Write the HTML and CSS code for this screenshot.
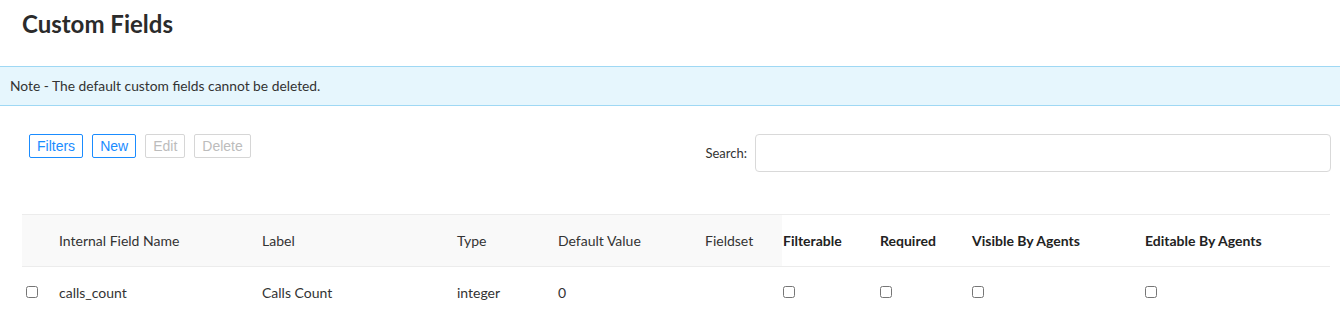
FILE: index.html
```html
<!DOCTYPE html>
<html lang="en">
<head>
  <meta charset="UTF-8" />
  <title>Custom Fields</title>
  <link rel="stylesheet" href="styles.css">
</head>
<body>
  <h1 class="page-title">Custom Fields</h1>

  <div class="note">Note - The default custom fields cannot be deleted.</div>

  <div class="toolbar">
    <div class="actions">
      <button class="btn">Filters</button>
      <button class="btn">New</button>
      <button class="btn" disabled>Edit</button>
      <button class="btn" disabled>Delete</button>
    </div>
    <label class="search">
      <span>Search:</span>
      <input type="text" />
    </label>
  </div>

  <table class="fields-table">
    <colgroup>
      <col style="width: 29px">
      <col style="width: 203px">
      <col style="width: 195px">
      <col style="width: 101px">
      <col style="width: 147px">
      <col style="width: 85px">
      <col style="width: 97px">
      <col style="width: 92px">
      <col style="width: 173px">
      <col style="width: 186px">
    </colgroup>
    <thead>
      <tr>
        <th class="shaded"></th>
        <th class="shaded">Internal Field Name</th>
        <th class="shaded">Label</th>
        <th class="shaded">Type</th>
        <th class="shaded">Default Value</th>
        <th class="shaded">Fieldset</th>
        <th class="flag">Filterable</th>
        <th class="flag">Required</th>
        <th class="flag">Visible By Agents</th>
        <th class="flag">Editable By Agents</th>
      </tr>
    </thead>
    <tbody>
      <tr>
        <td class="select"><input type="checkbox" class="row-check" /></td>
        <td>calls_count</td>
        <td>Calls Count</td>
        <td>integer</td>
        <td>0</td>
        <td></td>
        <td class="flag"><input type="checkbox" class="flag-check" /></td>
        <td class="flag"><input type="checkbox" class="flag-check" /></td>
        <td class="flag"><input type="checkbox" class="flag-check" /></td>
        <td class="flag"><input type="checkbox" class="flag-check" /></td>
      </tr>
    </tbody>
  </table>
</body>
</html>
```

FILE: styles.css
```css
* {
  box-sizing: border-box;
}
body {
  margin: 0;
  font-family: 'Lato', 'Liberation Sans', sans-serif;
  font-size: 14px;
  color: #333;
  background: #fff;
}
.page-title {
  margin: 0;
  padding: 9px 22px 0;
  height: 66px;
  font-size: 24px;
  font-weight: 700;
  color: #2b2b2b;
  line-height: 30px;
}
.note {
  background-color: #e6f6fd;
  border-top: 1px solid #9fd8f4;
  border-bottom: 1px solid #9fd8f4;
  height: 40px;
  line-height: 38px;
  padding: 0 10px;
  font-size: 13.8px;
  color: #333;
}
.toolbar {
  display: flex;
  justify-content: space-between;
  align-items: flex-start;
  padding: 28px 9px 0 29px;
  height: 108px;
}
.actions {
  display: flex;
  gap: 9px;
}
.btn {
  font-family: 'Liberation Sans', Arial, sans-serif;
  font-size: 14px;
  background: #fff;
  color: #1a8cff;
  border: 1px solid #1a8cff;
  border-radius: 2px;
  height: 24px;
  padding: 0 7px;
  cursor: pointer;
}
.btn:disabled {
  color: #bcbcbc;
  border-color: #d6d6d6;
  cursor: default;
}
.search {
  display: flex;
  align-items: center;
  gap: 8px;
  font-size: 13px;
  color: #333;
}
.search input {
  width: 576px;
  height: 38px;
  border: 1px solid #d9d9d9;
  border-radius: 4px;
  outline: none;
}
.fields-table {
  margin-left: 22px;
  width: 1308px;
  table-layout: fixed;
  border-collapse: collapse;
}
.fields-table th,
.fields-table td {
  text-align: left;
  padding: 0 8px;
  height: 52px;
  white-space: nowrap;
}
.fields-table thead tr {
  border-top: 1px solid #ececec;
  border-bottom: 1px solid #ececec;
}
.fields-table th.shaded {
  background-color: #f9f9f9;
  font-weight: 400;
  color: #333;
}
.fields-table th.flag {
  font-weight: 700;
  color: #222;
  padding-left: 1px;
}
.fields-table td.flag {
  padding-left: 1px;
}
.fields-table td.select {
  padding-left: 4px;
}
.row-check,
.flag-check {
  display: block;
  margin: 0 0 2px;
  width: 12px;
  height: 12px;
}
```
